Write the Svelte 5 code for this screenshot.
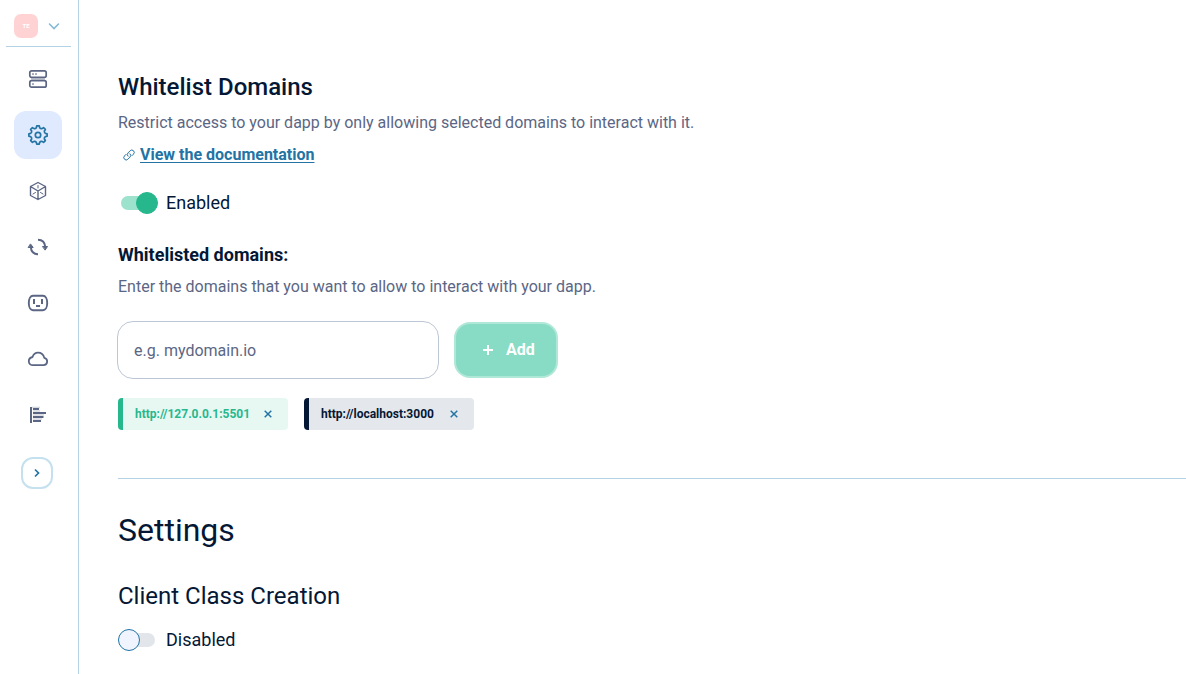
<script>
  let enabled = $state(true);
  let classCreation = $state(false);
  let domain = $state('');
  let domains = $state(['http://127.0.0.1:5501', 'http://localhost:3000']);

  const nav = ['Servers', 'Settings', 'Network', 'Sync', 'Plugins', 'Cloud', 'Analytics'];

  // Outline of an eight-toothed cog centred on 12,12
  const point = (r, deg) => {
    const a = (deg * Math.PI) / 180;
    return `${(12 + r * Math.cos(a)).toFixed(2)} ${(12 + r * Math.sin(a)).toFixed(2)}`;
  };
  const gear =
    Array.from({ length: 8 }, (_, i) => {
      const a = i * 45;
      return `${i ? 'L' : 'M'}${point(9.2, a - 8)}L${point(9.2, a + 8)}L${point(7.5, a + 13)}A2.2 2.2 0 0 0 ${point(7.5, a + 32)}`;
    }).join('') + 'Z';

  function add(event) {
    event.preventDefault();
    if (domain.trim()) domains.push(domain.trim());
    domain = '';
  }
</script>

<div class="app">
  <aside>
    <button class="account" aria-label="Switch account">
      <span class="avatar">TE</span>
      <svg width="12" height="10" viewBox="0 0 12 10"><path d="M1.500 3L6 7.500 10.500 3" fill="none" stroke="#86b9d7" stroke-width="1.600" stroke-linecap="round" /></svg>
    </button>
    <nav>
      {#each nav as name}
        <a href="#{name.toLowerCase()}" class:active={name === 'Settings'} aria-label={name}>
          <svg width="24" height="24" viewBox="0 0 24 24" fill="none" stroke="currentColor" stroke-width="1.500" stroke-linejoin="round" stroke-linecap="round">
            {#if name === 'Servers'}
              <path d="M5 12h14" stroke-width="3" stroke-linecap="butt" opacity=".3" />
              <rect x="3.800" y="3.800" width="16.400" height="6.600" rx="1.800" stroke-width="1.700" />
              <rect x="3.800" y="13.600" width="16.400" height="6.600" rx="1.800" stroke-width="1.700" />
              <path d="M7 6.500v1M10 6.500v1M7 16.500v1" stroke-width="1.200" />
            {:else if name === 'Settings'}
              <path d={gear} stroke-width="1.700" />
              <circle cx="12" cy="12" r="2.700" stroke-width="1.700" />
            {:else if name === 'Network'}
              <path d="M12 3.500l7.500 4v9L12 20.500l-7.500-4v-9zM4.500 7.500L12 12l7.500-4.500M12 12v8.500" stroke-width="1.400" />
              <path d="M12 6.500V9M7 15l2.500-1.500M17 15l-2.500-1.500" stroke-width="1" />
            {:else if name === 'Sync'}
              <path d="M12 4.800c4 0 6.800 2.500 7.200 7" stroke-width="2" stroke-linecap="butt" />
              <path d="M12 19.200c-4 0-6.800-2.500-7.200-7" stroke-width="2" stroke-linecap="butt" />
              <path d="M16.800 11.500h4.700l-2.200 3.300zM2.500 12.500h4.700L4.700 9.200z" fill="currentColor" stroke-width="1" />
            {:else if name === 'Plugins'}
              <path d="M7 4.800h10c2.400 0 4.200 3 4.200 7.200s-1.800 7.200-4.200 7.200H7c-2.400 0-4.200-3-4.200-7.200S4.600 4.800 7 4.800z" stroke-width="1.900" />
              <path d="M8 8v5M16 8v5M10 15h4" stroke-width="2" stroke-linecap="butt" />
            {:else if name === 'Cloud'}
              <path d="M7 18.200h10.500a3.700 3.700 0 0 0 .8-7.300C17.500 7.800 15 5.700 12 5.700S7.500 7.200 6.500 10C4.300 10.500 2.800 12 2.800 14.200c0 2.300 1.800 4 4.200 4z" stroke-width="1.800" />
            {:else}
              <path d="M5 4v16" stroke-width="2" stroke-linecap="butt" />
              <path d="M7 6h6M7 10h13M7 14h10.500M7 18h8" stroke-width="2" stroke-linecap="butt" />
              <path d="M6 4.500h8M7 8h7M7 12h11M7 16h9" stroke-width="1.500" stroke-linecap="butt" opacity=".25" />
            {/if}
          </svg>
        </a>
      {/each}
    </nav>
    <button class="expand" aria-label="Expand sidebar">
      <svg width="10" height="10" viewBox="0 0 10 10"><path d="M3 1.500L6.500 5 3 8.500" fill="none" stroke="#2373a4" stroke-width="1.700" /></svg>
    </button>
  </aside>

  <main>
    <section class="whitelist">
      <h2>Whitelist Domains</h2>
      <p>Restrict access to your dapp by only allowing selected domains to interact with it.</p>
      <a class="docs" href="#documentation">
        <svg width="12" height="12" viewBox="0 0 24 24" fill="none" stroke="currentColor" stroke-width="2" stroke-linecap="round">
          <path d="M10 14.500a4.700 4.700 0 0 1 0-6.700l4.300-4.300a4.700 4.700 0 0 1 6.700 6.700l-3 3" />
          <path d="M14 9.500a4.700 4.700 0 0 1 0 6.700l-4.300 4.300A4.700 4.700 0 0 1 3 13.800l3-3" />
        </svg>
        <span>View the documentation</span>
      </a>
      <label class="toggle">
        <input type="checkbox" bind:checked={enabled} />
        <span>{enabled ? 'Enabled' : 'Disabled'}</span>
      </label>

      <h3><label for="domain">Whitelisted domains:</label></h3>
      <p>Enter the domains that you want to allow to interact with your dapp.</p>
      <form onsubmit={add}>
        <input id="domain" type="text" placeholder="e.g. mydomain.io" bind:value={domain} />
        <button class="add">
          <svg width="12" height="12" viewBox="0 0 12 12"><path d="M6 1v10M1 6h10" stroke="#fff" stroke-width="2" /></svg>
          Add
        </button>
      </form>
      <ul>
        {#each domains as item, i}
          <li class:local={i > 0}>
            <span>{item}</span>
            <button aria-label="Remove {item}" onclick={() => domains.splice(i, 1)}>
              <svg width="8" height="8" viewBox="0 0 8 8"><path d="M.7.7l6.600 6.600M7.300.7L.7 7.300" stroke="#2373a4" stroke-width="1.500" /></svg>
            </button>
          </li>
        {/each}
      </ul>
    </section>

    <section class="settings">
      <h1>Settings</h1>
      <h2>Client Class Creation</h2>
      <label class="toggle">
        <input type="checkbox" bind:checked={classCreation} />
        <span>{classCreation ? 'Enabled' : 'Disabled'}</span>
      </label>
    </section>
  </main>
</div>

<style>
  :global(body) {
    margin: 0;
    background: #fff;
  }
  .app {
    display: flex;
    min-height: 100vh;
    font-family: Roboto, 'Liberation Sans', sans-serif;
    font-size: 16px;
    line-height: 24px;
    color: #041836;
  }
  .app *,
  .app *::before,
  .app *::after {
    box-sizing: border-box;
  }
  button,
  input {
    font: inherit;
    margin: 0;
  }
  button {
    padding: 0;
    border: 0;
    background: none;
    cursor: pointer;
  }
  svg {
    display: block;
    flex: none;
  }
  aside {
    display: flex;
    flex-direction: column;
    flex: none;
    width: 79px;
    border-right: 1px solid #b3d3e4;
  }
  .account {
    display: flex;
    align-items: center;
    gap: 10px;
    margin: 0 7px 0 6px;
    padding: 14px 8px 8px;
    border-bottom: 1px solid #b3d3e4;
  }
  .avatar {
    width: 24px;
    height: 24px;
    border-radius: 7px;
    background: #ffd3d3;
    color: #fff;
    font-size: 6px;
    font-weight: 700;
    text-align: center;
  }
  nav {
    display: flex;
    flex-direction: column;
    gap: 8px;
    padding: 8px 14px;
  }
  nav a {
    display: grid;
    place-items: center;
    width: 48px;
    height: 48px;
    border-radius: 12px;
    color: #5b6684;
  }
  nav a.active {
    background: #e0eafe;
    color: #2373a4;
  }
  .expand {
    display: grid;
    place-items: center;
    width: 32px;
    height: 32px;
    margin: 10px 21px;
    border: 2px solid #c5e0ef;
    border-radius: 12px;
  }
  main {
    flex: 1;
    min-width: 0;
    padding: 71px 0 20px 39px;
  }
  h1,
  h2,
  h3,
  p,
  ul {
    margin: 0;
    padding: 0;
  }
  h1 {
    font-size: 32px;
    line-height: 40px;
    font-weight: 400;
  }
  h2 {
    font-size: 24px;
    line-height: 32px;
    font-weight: 400;
  }
  .whitelist h2 {
    font-weight: 500;
  }
  h3 {
    margin-top: 28px;
    font-size: 18px;
    font-weight: 700;
  }
  p {
    margin-top: 8px;
    color: #5b6684;
  }
  .docs {
    display: flex;
    align-items: center;
    gap: 5px;
    width: fit-content;
    margin-top: 8px;
    padding-left: 5px;
    color: #2373a4;
    font-weight: 700;
    text-decoration: none;
  }
  .docs span {
    text-decoration: underline;
    text-underline-offset: 2px;
  }
  .toggle {
    display: flex;
    align-items: center;
    gap: 8px;
    width: fit-content;
    margin-top: 24px;
    font-size: 18px;
  }
  .toggle input {
    appearance: none;
    display: flex;
    align-items: center;
    width: 40px;
    height: 22px;
    position: relative;
    cursor: pointer;
  }
  .toggle input::before {
    content: '';
    position: absolute;
    inset: 4px 3px;
    border-radius: 7px;
    background: #e2e6eb;
  }
  .toggle input::after {
    content: '';
    position: relative;
    width: 22px;
    height: 22px;
    border: 1px solid #2373a4;
    border-radius: 50%;
    background: #eff4ff;
  }
  .toggle input:checked::before {
    background: #9ce2cc;
  }
  .toggle input:checked::after {
    margin-left: 18px;
    border-color: #27b78d;
    background: #27b78d;
  }
  form {
    display: flex;
    align-items: center;
    gap: 15px;
    margin: 22px 0 0 -1px;
  }
  form input {
    flex: 0 1 322px;
    min-width: 0;
    height: 58px;
    padding: 0 16px;
    border: 1px solid #bdc6d5;
    border-radius: 16px;
    background: #fff;
    color: #041836;
  }
  form input::placeholder {
    color: #5b6684;
    opacity: 1;
  }
  .add {
    display: flex;
    align-items: center;
    gap: 12px;
    height: 56px;
    padding: 0 21px 0 26px;
    border: 2px solid #b0e8d7;
    border-radius: 16px;
    background: #88dbc4;
    color: #fff;
    font-weight: 700;
  }
  ul {
    display: flex;
    flex-wrap: wrap;
    gap: 16px;
    margin-top: 19px;
    list-style: none;
  }
  li {
    display: flex;
    align-items: center;
    justify-content: space-between;
    min-width: 170px;
    height: 32px;
    padding: 0 16px 0 12px;
    border-left: 5px solid #27b78d;
    border-radius: 4px;
    background: #e7f8f3;
    color: #27b78d;
    font-size: 12px;
    font-weight: 700;
  }
  li.local {
    border-color: #041836;
    background: #e4e7eb;
    color: #041836;
  }
  .settings {
    margin-top: 48px;
    padding-top: 31px;
    border-top: 1px solid #b3d3e4;
  }
  .settings h2 {
    margin-top: 30px;
  }
  .settings .toggle {
    margin-top: 16px;
  }
</style>
